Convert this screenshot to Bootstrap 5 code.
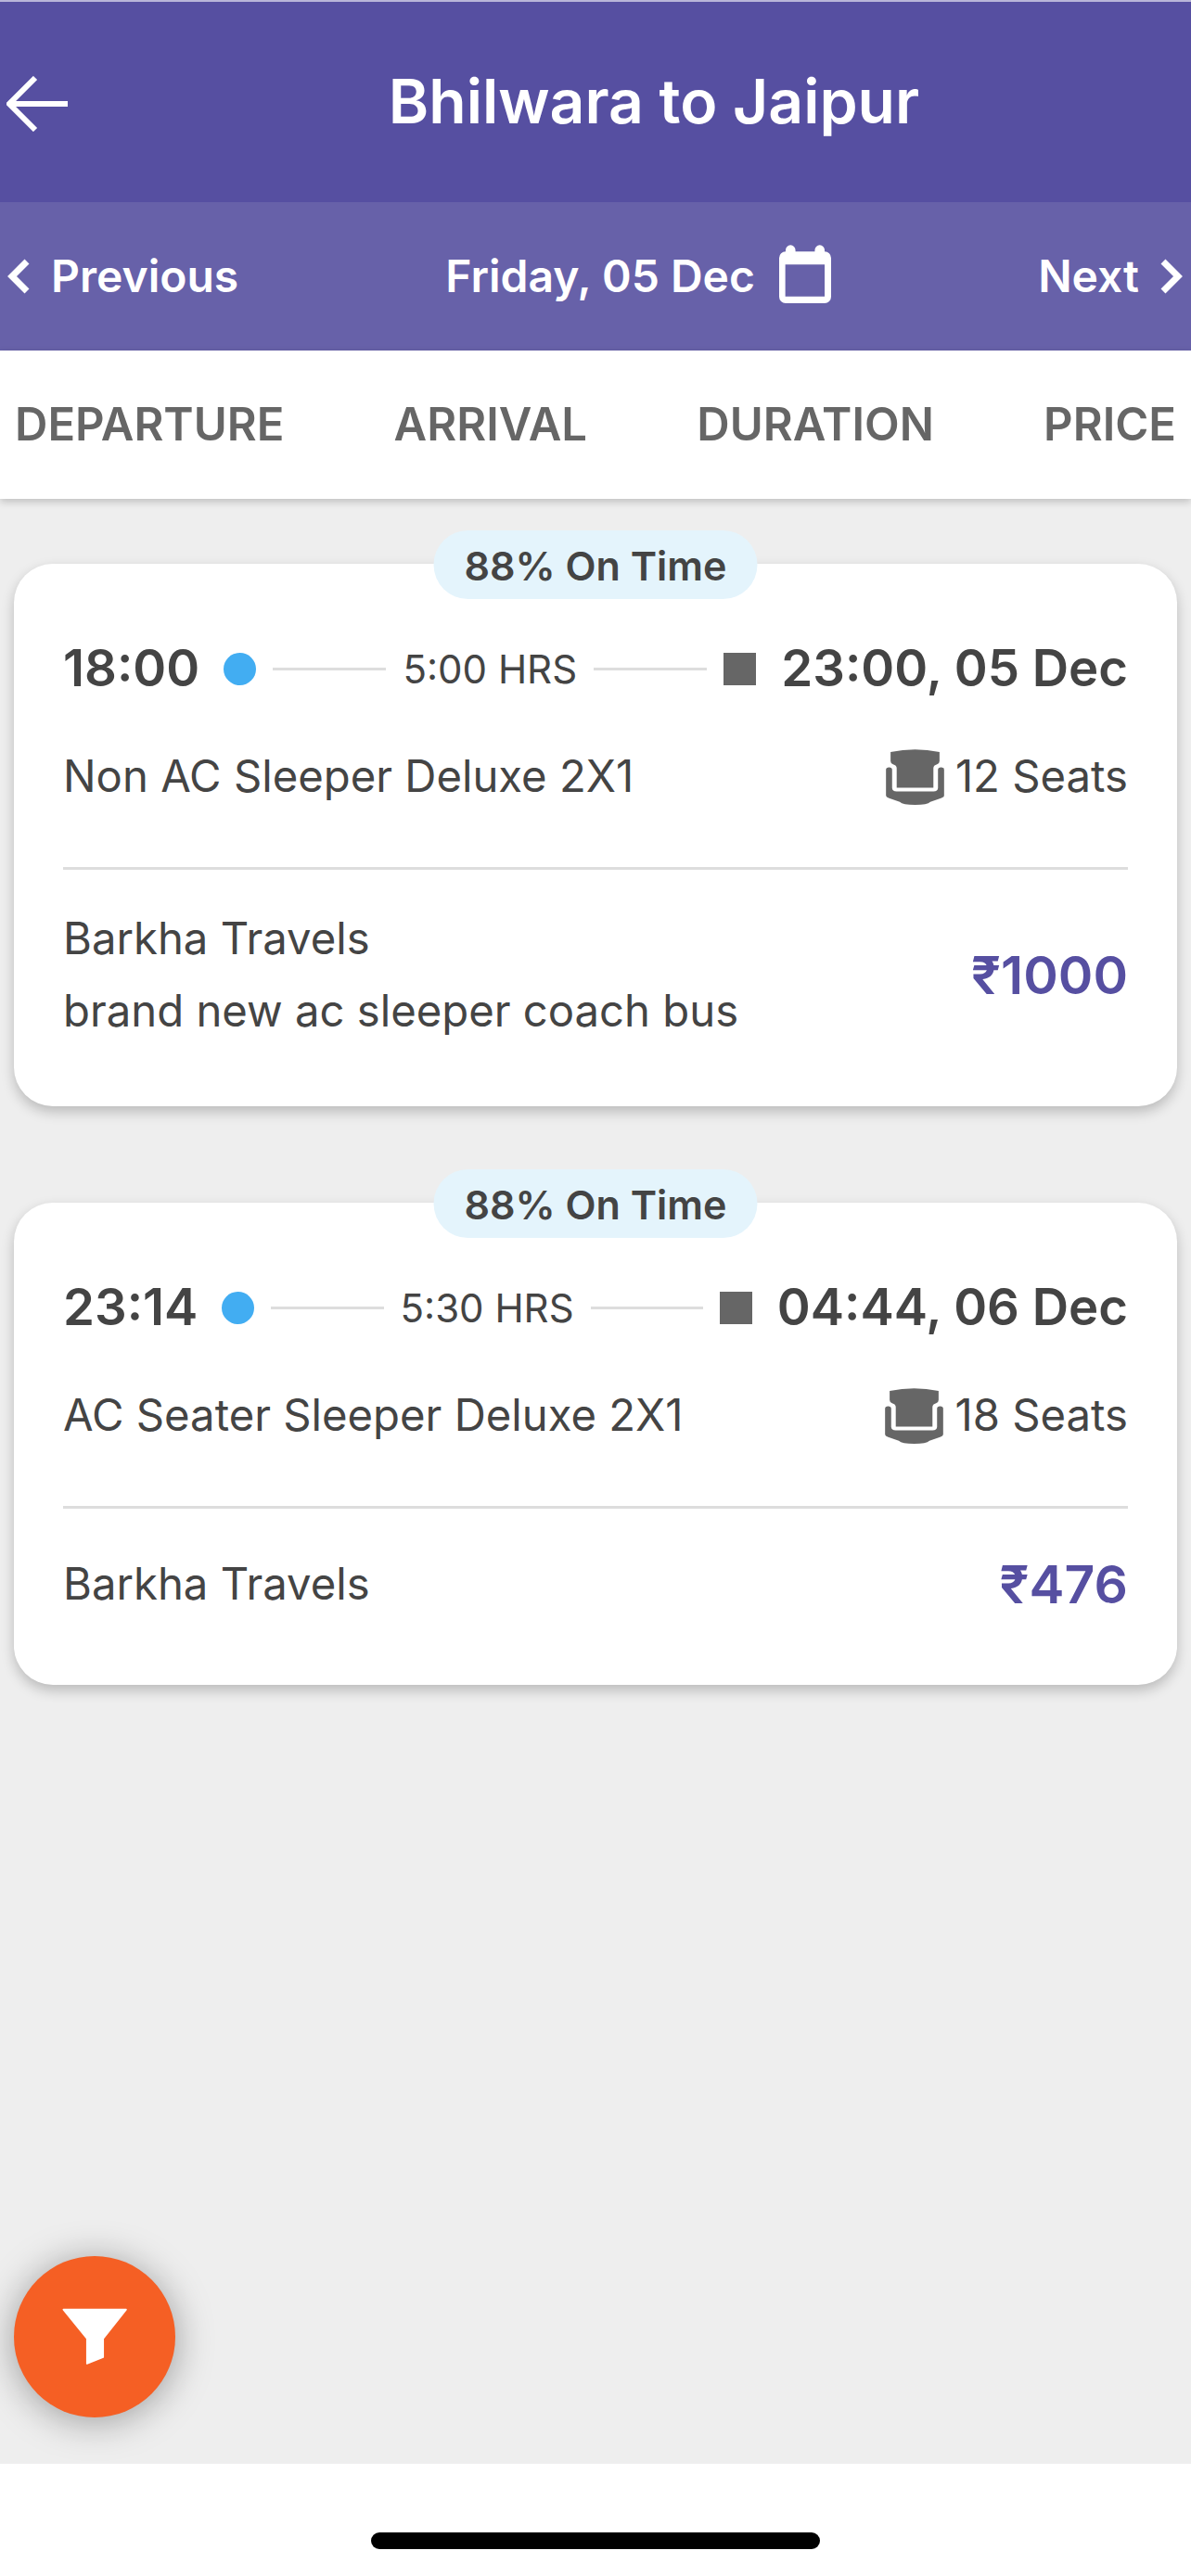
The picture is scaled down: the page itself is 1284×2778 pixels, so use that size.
<!DOCTYPE html>
<html lang="en">

<head>
    <meta charset="UTF-8" />
    <meta name="viewport" content="width=device-width, initial-scale=1" />
    <title>Bhilwara to Jaipur</title>
    <link href="https://cdn.jsdelivr.net/npm/bootstrap@5.3.3/dist/css/bootstrap.min.css" rel="stylesheet" />
    <style>
        body {
            background-color: #eeeeee;
            color: #444444;
            font-family: "Inter", "Roboto", sans-serif;
            font-size: 47.25px;
        }

        .page-wrap {
            min-height: 100vh;
        }

        .top-bar {
            height: 218px;
            background-color: #564fa1;
            border-top: 2px solid #b9b6d9;
            color: #fff;
        }

        .back-btn {
            width: 126px;
            padding-left: 7px;
            margin-bottom: 4px;
        }

        .top-title {
            font-size: 66px;
            font-weight: 600;
            margin: 0;
            line-height: 1.2;
        }

        .date-bar {
            height: 160px;
            background-color: #6761a9;
            color: #fff;
            font-size: 48px;
            font-weight: 600;
            padding: 0 9px 0 8px;
        }

        .step-link {
            gap: 22px;
        }

        .cal-icon {
            margin-left: 2px;
            margin-bottom: 6px;
        }

        .tab-bar {
            height: 160px;
            background-color: #fff;
            color: #666666;
            font-size: 49px;
            font-weight: 600;
            padding: 0 16px 0 16px;
            box-shadow: 0 3px 8px rgba(0, 0, 0, 0.2);
            position: relative;
        }

        .trip-list {
            padding: 70px 15px 0;
        }

        .trip-card {
            position: relative;
            background-color: #fff;
            border-radius: 42px;
            padding: 75px 53px 0 53px;
            margin-bottom: 104px;
            box-shadow: 0 6px 14px rgba(0, 0, 0, 0.22);
        }

        .ontime-tag {
            position: absolute;
            top: -36px;
            left: 50%;
            transform: translateX(-50%);
            width: 349px;
            height: 74px;
            border-radius: 37px;
            background-color: #e4f4fc;
            font-size: 43px;
            font-weight: 600;
            line-height: 76px;
            text-align: center;
        }

        .time-row {
            height: 76px;
        }

        .time-txt {
            font-size: 54.5px;
            font-weight: 600;
            white-space: nowrap;
        }

        .from-dot {
            width: 35px;
            height: 35px;
            border-radius: 50%;
            background-color: #42adf2;
            margin-left: 26px;
            flex: none;
        }

        .to-square {
            width: 35px;
            height: 35px;
            background-color: #666666;
            margin-right: 27px;
            flex: none;
        }

        .dur-line {
            height: 3px;
            background-color: #dddddd;
            flex: 1 1 0;
            margin: 0 18px;
        }

        .dur-txt {
            font-size: 42px;
            white-space: nowrap;
        }

        .bus-row {
            margin-top: 40px;
            height: 76px;
        }

        .seat-icon {
            width: 63px;
            height: 61px;
            margin-right: 12px;
        }

        .card-rule {
            height: 3px;
            background-color: #dddddd;
            margin-top: 60px;
        }

        .op-row {
            padding: 35px 0 64px;
        }

        .op-row.one-line {
            padding: 42px 0 70px;
        }

        .op-row p {
            margin: 0;
            line-height: 78px;
        }

        .fare {
            color: #564fa1;
            font-size: 57px;
            font-weight: 600;
            line-height: 1;
        }

        .filter-fab {
            position: absolute;
            left: 15px;
            bottom: 50px;
            width: 174px;
            height: 174px;
            border-radius: 50%;
            border: 0;
            background-color: #f55f24;
            box-shadow: 0 4px 40px rgba(0, 0, 0, 0.35);
        }

        .home-strip {
            height: 121px;
            background-color: #fff;
        }

        .home-line {
            width: 484px;
            height: 18px;
            border-radius: 9px;
            background-color: #000;
            margin-bottom: 29px;
        }
    </style>
</head>

<body>
    <div class="page-wrap d-flex flex-column">

        <!-- Header -->
        <header class="top-bar d-flex align-items-center">
            <div class="back-btn">
                <svg width="66" height="60" viewBox="0 0 66 60" fill="none" stroke="#fff" stroke-width="6">
                    <path d="M31 2 3 30l28 28M3 30h63" />
                </svg>
            </div>
            <h1 class="top-title flex-fill text-center">Bhilwara to Jaipur</h1>
        </header>

        <!-- Date switcher -->
        <div class="date-bar d-flex align-items-center justify-content-between">
            <div class="step-link d-flex align-items-center">
                <svg width="25" height="38" viewBox="0 0 25 38" fill="none" stroke="#fff" stroke-width="7">
                    <path d="M21 3 5 19l16 16" />
                </svg>
                <span>Previous</span>
            </div>
            <div class="d-flex align-items-center gap-4">
                <span>Friday, 05 Dec</span>
                <svg class="cal-icon" width="56" height="63" viewBox="128 68 169 190" fill="#fff">
                    <path fill-rule="evenodd" d="M149 85a16 16 0 0 1 32 0v5h63v-5a16 16 0 0 1 32 0v5a21 21 0 0 1 21 21v126a21 21 0 0 1-21 21H149a21 21 0 0 1-21-21V111a21 21 0 0 1 21-21zM148 132v104h128V132z" />
                </svg>
            </div>
            <div class="step-link d-flex align-items-center">
                <span>Next</span>
                <svg width="25" height="38" viewBox="0 0 25 38" fill="none" stroke="#fff" stroke-width="7">
                    <path d="M4 3 20 19 4 35" />
                </svg>
            </div>
        </div>

        <!-- Sort tabs -->
        <div class="tab-bar d-flex align-items-center justify-content-between">
            <span>DEPARTURE</span>
            <span>ARRIVAL</span>
            <span>DURATION</span>
            <span>PRICE</span>
        </div>

        <main class="flex-fill position-relative">
            <div class="trip-list">

                <div class="trip-card">
                    <div class="ontime-tag">88% On Time</div>
                    <div class="time-row d-flex align-items-center">
                        <span class="time-txt">18:00</span>
                        <span class="from-dot"></span>
                        <span class="dur-line"></span>
                        <span class="dur-txt">5:00 HRS</span>
                        <span class="dur-line"></span>
                        <span class="to-square"></span>
                        <span class="time-txt">23:00, 05 Dec</span>
                    </div>
                    <div class="bus-row d-flex align-items-center justify-content-between">
                        <span>Non AC Sleeper Deluxe 2X1</span>
                        <span class="d-flex align-items-center">
                            <svg class="seat-icon" viewBox="155 80 190 185" fill="#666">
                                <path d="M170 92Q250 76 330 92V122Q330 130 322 132 310 135 310 145V209H190V145Q190 135 178 132 170 130 170 122Z" />
                                <path d="M155 150Q155 142 165 142 175 142 175 150V210Q175 221 190 221H310Q325 221 325 210V150Q325 142 335 142 345 142 345 150V235Q345 240 335 243L300 255Q290 265 250 265 210 265 200 255L165 243Q155 240 155 235Z" />
                            </svg>
                            12 Seats
                        </span>
                    </div>
                    <div class="card-rule"></div>
                    <div class="op-row d-flex align-items-center justify-content-between">
                        <div>
                            <p>Barkha Travels</p>
                            <p>brand new ac sleeper coach bus</p>
                        </div>
                        <span class="fare">₹1000</span>
                    </div>
                </div>

                <div class="trip-card">
                    <div class="ontime-tag">88% On Time</div>
                    <div class="time-row d-flex align-items-center">
                        <span class="time-txt">23:14</span>
                        <span class="from-dot"></span>
                        <span class="dur-line"></span>
                        <span class="dur-txt">5:30 HRS</span>
                        <span class="dur-line"></span>
                        <span class="to-square"></span>
                        <span class="time-txt">04:44, 06 Dec</span>
                    </div>
                    <div class="bus-row d-flex align-items-center justify-content-between">
                        <span>AC Seater Sleeper Deluxe 2X1</span>
                        <span class="d-flex align-items-center">
                            <svg class="seat-icon" viewBox="155 80 190 185" fill="#666">
                                <path d="M170 92Q250 76 330 92V122Q330 130 322 132 310 135 310 145V209H190V145Q190 135 178 132 170 130 170 122Z" />
                                <path d="M155 150Q155 142 165 142 175 142 175 150V210Q175 221 190 221H310Q325 221 325 210V150Q325 142 335 142 345 142 345 150V235Q345 240 335 243L300 255Q290 265 250 265 210 265 200 255L165 243Q155 240 155 235Z" />
                            </svg>
                            18 Seats
                        </span>
                    </div>
                    <div class="card-rule"></div>
                    <div class="op-row one-line d-flex align-items-center justify-content-between">
                        <p>Barkha Travels</p>
                        <span class="fare">₹476</span>
                    </div>
                </div>

            </div>

            <button class="filter-fab d-flex align-items-center justify-content-center" type="button">
                <svg width="72" height="62" viewBox="198 265 214 188" fill="#fff" stroke="#fff" stroke-width="5" stroke-linejoin="round">
                    <path d="M203 270H408L333 365V426L280 447V365Z" />
                </svg>
            </button>
        </main>

        <div class="home-strip d-flex align-items-end justify-content-center">
            <div class="home-line"></div>
        </div>
    </div>

    <script src="https://cdn.jsdelivr.net/npm/bootstrap@5.3.3/dist/js/bootstrap.bundle.min.js"></script>
</body>

</html>
